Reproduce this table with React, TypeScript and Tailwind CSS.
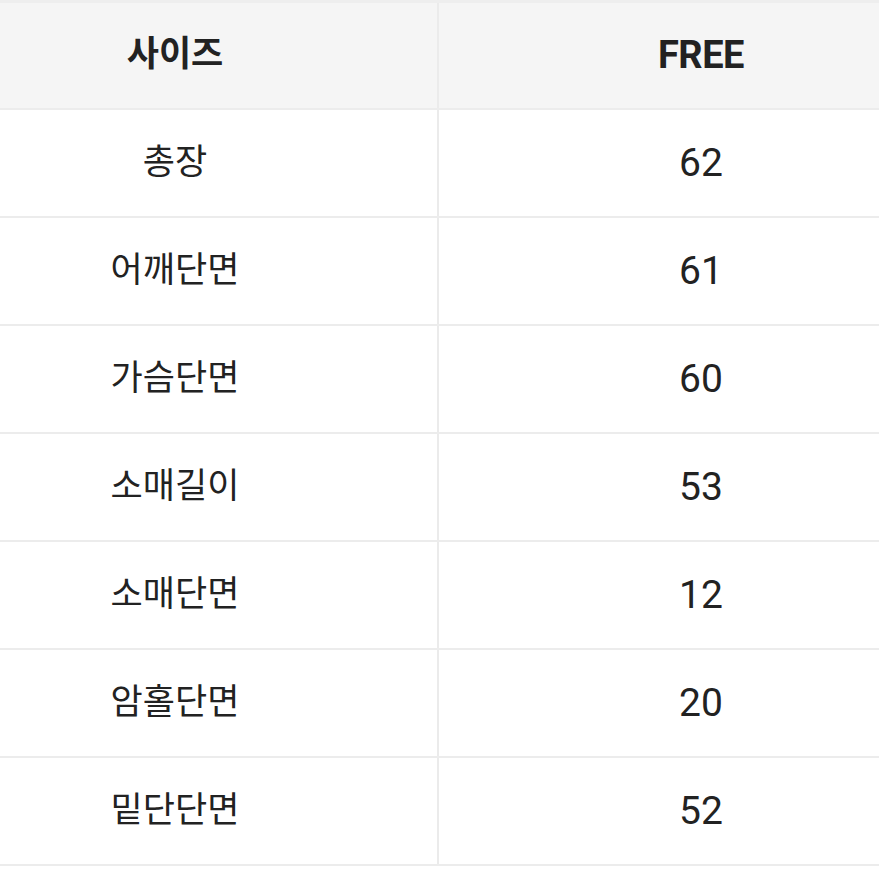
const rows: [string, string][] = [
  ["총장", "62"],
  ["어깨단면", "61"],
  ["가슴단면", "60"],
  ["소매길이", "53"],
  ["소매단면", "12"],
  ["암홀단면", "20"],
  ["밑단단면", "52"],
];

const font = { fontFamily: 'Roboto, "Noto Sans CJK KR", sans-serif' };

export default function App() {
  return (
    <main className="w-[879px] h-[879px] overflow-hidden bg-white text-[#222]" style={font}>
      <div className="ml-[-87px] w-[1050px] border-t-[3px] border-[#eeeeee]">
        {/* 헤더 */}
        <div className="flex h-[107px] bg-[#f5f5f5] border-b-2 border-[#ececec]">
          <div className="w-[524px] flex items-center justify-center text-[35px] font-bold">사이즈</div>
          <div className="w-[2px] bg-[#ebebeb]" />
          <div className="flex-1 flex items-center justify-center text-[38px] font-bold tracking-[-0.5px]">FREE</div>
        </div>

        {/* 사이즈 행 */}
        {rows.map(([label, value]) => (
          <div key={label} className="flex h-[108px] border-b-2 border-[#ececec]">
            <div className="w-[524px] flex items-center justify-center text-[35px]">{label}</div>
            <div className="w-[2px] bg-[#ebebeb]" />
            <div className="flex-1 flex items-center justify-center text-[39px]">{value}</div>
          </div>
        ))}
      </div>
    </main>
  );
}
